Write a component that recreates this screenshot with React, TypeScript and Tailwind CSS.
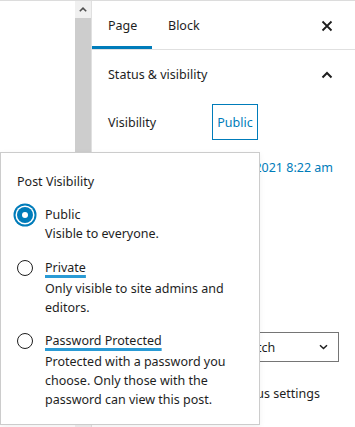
import React from "react";

function CloseIcon() {
  return (
    <svg width="12" height="12" viewBox="0 0 12 12" fill="none">
      <path d="M1.5 1.5L10.5 10.5M10.5 1.5L1.5 10.5" stroke="#1e1e1e" strokeWidth="1.8" />
    </svg>
  );
}

function ChevronUp() {
  return (
    <svg width="12" height="8" viewBox="0 0 12 8" fill="none">
      <path d="M1.5 6.5L6 2L10.5 6.5" stroke="#1e1e1e" strokeWidth="2" />
    </svg>
  );
}

function SmallChevronDown() {
  return (
    <svg width="9" height="6" viewBox="0 0 9 6" fill="none">
      <path d="M1 1.2L4.5 4.5L8 1.2" stroke="#1e1e1e" strokeWidth="1.5" />
    </svg>
  );
}

function ScrollArrowUp() {
  return (
    <svg width="8" height="5" viewBox="0 0 8 5" fill="none">
      <path d="M0.8 4.3L4 1.2L7.2 4.3" stroke="#505050" strokeWidth="1.6" />
    </svg>
  );
}

function Radio({ checked }: { checked?: boolean }) {
  if (checked) {
    return (
      <div className="mt-[1px] w-[16px] h-[16px] shrink-0 rounded-full bg-[#007cba] flex items-center justify-center shadow-[0_0_0_1.5px_#ffffff,0_0_0_3.5px_#007cba]">
        <div className="w-[6px] h-[6px] rounded-full bg-white" />
      </div>
    );
  }
  return <div className="mt-[1px] w-[16px] h-[16px] shrink-0 rounded-full border-[1.5px] border-[#1e1e1e]" />;
}

export default function App() {
  return (
    <div className="relative w-[355px] h-[427px] overflow-hidden bg-white border-t border-[#dcdcdc] flex font-['Noto_Sans',sans-serif] text-[12.5px] text-[#1e1e1e]">
      {/* blank area */}
      <div className="w-[75px] shrink-0" />
      {/* scrollbar */}
      <div className="w-[16px] shrink-0 flex flex-col bg-[#f0f0f0]">
        <div className="h-[17px] flex items-center justify-center">
          <ScrollArrowUp />
        </div>
        <div className="h-[403px] bg-[#cdcdcd]" />
      </div>
      {/* sidebar */}
      <div className="flex-1 min-w-0 overflow-hidden border-l border-[#e0e0e0] flex flex-col">
        <div className="h-[49px] border-b border-[#e0e0e0] flex items-stretch">
          <div className="w-[60px] px-4 pt-[3px] flex items-center shadow-[inset_0_-3px_0_#007cba]">Page</div>
          <div className="px-4 pt-[3px] flex items-center">Block</div>
          <div className="ml-auto pr-[22px] pt-[1px] flex items-center">
            <CloseIcon />
          </div>
        </div>
        <div className="px-4">
          <div className="h-[48px] flex items-center justify-between">
            <span className="pt-[3px]">Status &amp; visibility</span>
            <span className="pr-[6px] pt-[2px] flex items-center">
              <ChevronUp />
            </span>
          </div>
          <div className="mt-[6px] h-[36px] flex items-center">
            <span className="w-[104px] pt-[3px]">Visibility</span>
            <span className="h-[36px] w-[46px] pt-[2px] border border-[#007cba] text-[#007cba] flex items-center justify-center">
              Public
            </span>
          </div>
          <div className="mt-[9px] h-[36px] flex items-center">
            <span className="w-[104px] pt-[2px]">Publish</span>
            <span className="ml-auto pr-[6px] pt-[2px] text-[#007cba] whitespace-nowrap">Jun 24, 2021 8:22 am</span>
          </div>
          <div className="mt-[147px] h-[30px] border border-[#757575] flex items-center pl-[13px] pr-[10px]">
            <span className="pt-[2px] whitespace-nowrap overflow-hidden min-w-0">Default site layouts switch</span>
            <span className="ml-auto pl-2 flex items-center shrink-0">
              <SmallChevronDown />
            </span>
          </div>
          <div className="mt-[21px] h-[20px] pt-[2px] pl-[3px] flex items-center whitespace-nowrap">
            Shows the advanced status settings
          </div>
        </div>
      </div>

      {/* popover */}
      <div className="absolute left-0 top-[151px] w-[260px] h-[273px] bg-white border border-[#cccccc] shadow-[0_2px_6px_rgba(0,0,0,0.06)] px-4 pt-[19px]">
        <div className="leading-[20px]">Post Visibility</div>
        <div className="mt-[14px] flex flex-col">
          <div className="flex gap-[12px]">
            <Radio checked />
            <div>
              <div className="leading-[18px]">Public</div>
              <div className="leading-[19px] whitespace-nowrap">Visible to everyone.</div>
            </div>
          </div>
          <div className="mt-[16px] flex gap-[12px]">
            <Radio />
            <div>
              <div className="leading-[18px]">
                <span className="underline decoration-[3px] decoration-[#2a9bd5] underline-offset-[3px]">Private</span>
              </div>
              <div className="mt-[2px] leading-[19px] whitespace-nowrap">
                Only visible to site admins and
                <br />
                editors.
              </div>
            </div>
          </div>
          <div className="mt-[15px] flex gap-[12px]">
            <Radio />
            <div>
              <div className="leading-[18px]">
                <span className="underline decoration-[3px] decoration-[#2a9bd5] underline-offset-[3px]">
                  Password Protected
                </span>
              </div>
              <div className="mt-[2px] leading-[19px] whitespace-nowrap">
                Protected with a password you
                <br />
                choose. Only those with the
                <br />
                password can view this post.
              </div>
            </div>
          </div>
        </div>
      </div>
    </div>
  );
}
